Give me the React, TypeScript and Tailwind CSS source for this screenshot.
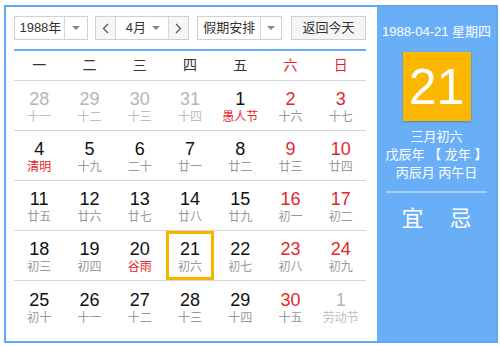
import React from "react";

type Day = { n: number; l: string; kind?: "muted" | "weekend" | "festival" | "today" };

const weekdays = ["一", "二", "三", "四", "五", "六", "日"];

const weeks: Day[][] = [
  [
    { n: 28, l: "十一", kind: "muted" },
    { n: 29, l: "十二", kind: "muted" },
    { n: 30, l: "十三", kind: "muted" },
    { n: 31, l: "十四", kind: "muted" },
    { n: 1, l: "愚人节", kind: "festival" },
    { n: 2, l: "十六" },
    { n: 3, l: "十七" },
  ],
  [
    { n: 4, l: "清明", kind: "festival" },
    { n: 5, l: "十九" },
    { n: 6, l: "二十" },
    { n: 7, l: "廿一" },
    { n: 8, l: "廿二" },
    { n: 9, l: "廿三" },
    { n: 10, l: "廿四" },
  ],
  [
    { n: 11, l: "廿五" },
    { n: 12, l: "廿六" },
    { n: 13, l: "廿七" },
    { n: 14, l: "廿八" },
    { n: 15, l: "廿九" },
    { n: 16, l: "初一" },
    { n: 17, l: "初二" },
  ],
  [
    { n: 18, l: "初三" },
    { n: 19, l: "初四" },
    { n: 20, l: "谷雨", kind: "festival" },
    { n: 21, l: "初六", kind: "today" },
    { n: 22, l: "初七" },
    { n: 23, l: "初八" },
    { n: 24, l: "初九" },
  ],
  [
    { n: 25, l: "初十" },
    { n: 26, l: "十一" },
    { n: 27, l: "十二" },
    { n: 28, l: "十三" },
    { n: 29, l: "十四" },
    { n: 30, l: "十五" },
    { n: 1, l: "劳动节", kind: "muted" },
  ],
];

function Caret() {
  return <span className="inline-block w-0 h-0 border-l-[4px] border-r-[4px] border-t-[4px] border-l-transparent border-r-transparent border-t-[#888]" />;
}

function Chevron({ dir }: { dir: "left" | "right" }) {
  return (
    <svg width="7" height="11" viewBox="0 0 7 11" fill="none" stroke="#555" strokeWidth="1.2">
      {dir === "left" ? <polyline points="6,1 1.5,5.5 6,10" /> : <polyline points="1,1 5.5,5.5 1,10" />}
    </svg>
  );
}

function Cell({ d, col }: { d: Day; col: number }) {
  const weekend = col >= 5;
  let numColor = "text-[#111]";
  if (d.kind === "muted") numColor = "text-[#b5b5b5]";
  else if (weekend) numColor = "text-[#e4262b]";
  let lunarColor = "text-[#999]";
  if (d.kind === "muted") lunarColor = "text-[#bdbdbd]";
  if (d.kind === "festival") lunarColor = "text-[#e4262b]";

  return (
    <div className="flex items-center justify-center">
      <div
        className={
          "flex flex-col items-center justify-center w-[48px] h-[49px] pt-[3px] " +
          (d.kind === "today" ? "border-[3px] border-[#f7b500]" : "")
        }
      >
        <span className={"text-[18px] leading-[20px] " + numColor}>{d.n}</span>
        <span className={"text-[12px] leading-[16px] " + lunarColor}>{d.l}</span>
      </div>
    </div>
  );
}

export default function App() {
  return (
    <div
      className="w-[500px] h-[346px] bg-white pt-[5px] pl-[4px]"
      style={{ fontFamily: '"Liberation Sans", "Noto Sans CJK SC", sans-serif' }}
    >
      <div className="w-[494px] h-[338px] border-2 border-[#5ea8f6] flex">
        <div className="w-[371px] pl-[8px] pt-[9px]">
          <div className="flex items-center h-[24px] w-[352px] text-[13px] text-[#333]">
            <div className="flex h-full w-[74px] border border-[#d0d0d0] bg-white">
              <div className="flex-1 flex items-center justify-center pl-[2px]">1988年</div>
              <div className="w-[23px] flex items-center justify-center border-l border-[#d8d8d8]">
                <Caret />
              </div>
            </div>
            <div className="flex h-full w-[95px] ml-[7px] border border-[#d0d0d0] bg-white">
              <div className="w-[20px] flex items-center justify-center border-r border-[#d8d8d8] bg-[#f6f6f6]">
                <Chevron dir="left" />
              </div>
              <div className="flex-1 flex items-center pl-[10px] pr-[8px] justify-between">
                <span>4月</span>
                <Caret />
              </div>
              <div className="w-[20px] flex items-center justify-center border-l border-[#d8d8d8] bg-[#f6f6f6]">
                <Chevron dir="right" />
              </div>
            </div>
            <div className="flex h-full w-[85px] ml-[8px] border border-[#d0d0d0] bg-white">
              <div className="flex-1 flex items-center justify-center">假期安排</div>
              <div className="w-[21px] flex items-center justify-center border-l border-[#d8d8d8]">
                <Caret />
              </div>
            </div>
            <div className="flex h-full items-center justify-center w-[75px] ml-[9px] border border-[#d0d0d0] bg-[#f5f5f5]">
              返回今天
            </div>
          </div>
          <div className="w-[352px] h-[2px] bg-[#66adf7] mt-[9px]" />
          <div className="grid grid-cols-7 w-[352px] h-[30px] items-center border-b border-[#d6d6d6] text-[14px]">
            {weekdays.map((w, i) => (
              <div key={w} className={"text-center " + (i >= 5 ? "text-[#e4262b]" : "text-[#333]")}>
                {w}
              </div>
            ))}
          </div>
          {weeks.map((week, wi) => (
            <div
              key={wi}
              className={
                "grid grid-cols-7 w-[352px] h-[50px] items-center " +
                (wi < weeks.length - 1 ? "border-b border-[#d6d6d6]" : "")
              }
            >
              {week.map((d, i) => (
                <Cell key={i} d={d} col={i} />
              ))}
            </div>
          ))}
        </div>
        <div className="flex-1 bg-[#69aff8] flex flex-col items-center text-white">
          <div className="text-[13px] mt-[17px] leading-[16px]">1988-04-21 星期四</div>
          <div className="w-[68px] h-[69px] mt-[12px] bg-[#fcb700] flex items-center justify-center shadow-[0_1px_2px_rgba(0,0,0,0.25)]">
            <span className="text-[50px] leading-none">21</span>
          </div>
          <div className="text-[13px] leading-[18px] mt-[7px] flex flex-col items-center">
            <span>三月初六</span>
            <span>戊辰年 【 龙年 】</span>
            <span>丙辰月 丙午日</span>
          </div>
          <div className="w-[101px] h-[2px] bg-[#a8cffa] mt-[9px]" />
          <div className="flex gap-[26px] mt-[14px] text-[22px] leading-[24px]">
            <span>宜</span>
            <span>忌</span>
          </div>
        </div>
      </div>
    </div>
  );
}
